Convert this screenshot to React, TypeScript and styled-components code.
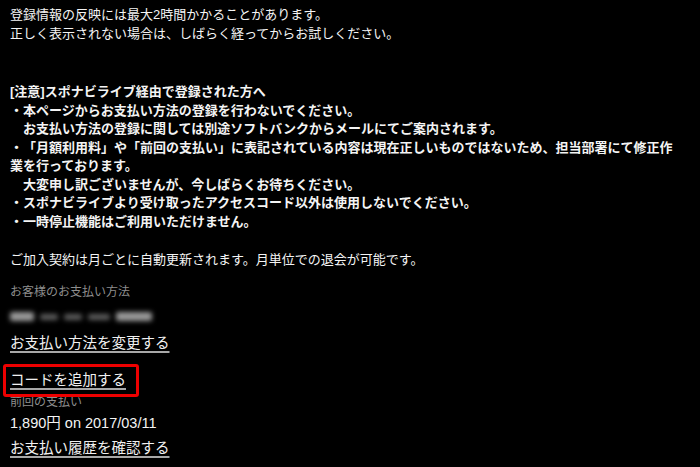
import React from "react";
import styled, { createGlobalStyle } from "styled-components";

const Global = createGlobalStyle`
  html, body { margin: 0; padding: 0; background: #000; }
  body { font-family: "Noto Sans CJK JP", "Noto Sans", sans-serif; }
`;

const Page = styled.main`
  display: flex;
  flex-direction: column;
  align-items: flex-start;
  padding: 6px 22px 0 10px;
  width: 668px;
  min-height: 467px;
  box-sizing: content-box;
  background: #000;
  color: #f2f2f2;
  font-family: "Liberation Sans", "Noto Sans CJK JP", sans-serif;
  text-spacing-trim: space-all;
`;

const Text = styled.p<{ $mt?: number; $bold?: boolean }>`
  margin: ${(p) => p.$mt ?? 0}px 0 0;
  font-size: 13px;
  line-height: 18.5px;
  font-weight: ${(p) => (p.$bold ? 700 : 400)};
  color: #f4f4f4;
  white-space: pre-wrap;
`;

const Label = styled.div<{ $mt?: number }>`
  margin-top: ${(p) => p.$mt ?? 0}px;
  font-size: 12px;
  line-height: 16px;
  color: #8e8e8e;
`;

const Masked = styled.div`
  display: flex;
  align-items: center;
  gap: 6px;
  margin-top: 9px;
  height: 16px;
  filter: blur(2.6px);
`;

const MaskPart = styled.span<{ $w: number; $dim?: boolean }>`
  display: block;
  width: ${(p) => p.$w}px;
  height: ${(p) => (p.$dim ? 6 : 9)}px;
  border-radius: 2px;
  background: ${(p) => (p.$dim ? "#5e5e5e" : "#9a9a9a")};
`;

const LinkRow = styled.div<{ $mt?: number }>`
  position: relative;
  margin-top: ${(p) => p.$mt ?? 0}px;
  line-height: 20px;
`;

const Link = styled.a`
  font-size: 14.5px;
  color: #f0f0f0;
  text-decoration: underline;
  text-decoration-color: #a8a8a8;
  text-decoration-thickness: 2px;
  text-underline-offset: 3px;
  cursor: pointer;
`;

const Amount = styled.div`
  margin-top: 3px;
  font-size: 14.5px;
  line-height: 20px;
  color: #f4f4f4;
`;

const Highlight = styled.span`
  position: absolute;
  left: -7px;
  top: -6px;
  width: 136px;
  height: 33px;
  box-sizing: border-box;
  border: 3px solid #ee0000;
  border-radius: 3px;
  pointer-events: none;
`;

export default function App() {
  return (
    <>
      <Global />
      <Page>
        <Text>
          {"登録情報の反映には最大2時間かかることがあります。\n正しく表示されない場合は、しばらく経ってからお試しください。"}
        </Text>
        <Text $bold $mt={40}>
          {"[注意]スポナビライブ経由で登録された方へ\n・本ページからお支払い方法の登録を行わないでください。\n　お支払い方法の登録に関しては別途ソフトバンクからメールにてご案内されます。\n・「月額利用料」や「前回の支払い」に表記されている内容は現在正しいものではないため、担当部署にて修正作業を行っております。\n　大変申し訳ございませんが、今しばらくお待ちください。\n・スポナビライブより受け取ったアクセスコード以外は使用しないでください。\n・一時停止機能はご利用いただけません。"}
        </Text>
        <Text $mt={20}>ご加入契約は月ごとに自動更新されます。月単位での退会が可能です。</Text>
        <Label $mt={14}>お客様のお支払い方法</Label>
        <Masked aria-label="登録済みのお支払い方法">
          <MaskPart $w={24} />
          <MaskPart $w={18} $dim />
          <MaskPart $w={18} $dim />
          <MaskPart $w={22} $dim />
          <MaskPart $w={36} />
        </Masked>
        <LinkRow $mt={8}>
          <Link>お支払い方法を変更する</Link>
        </LinkRow>
        <LinkRow $mt={17}>
          <Link>コードを追加する</Link>
          <Highlight />
        </LinkRow>
        <Label $mt={4}>前回の支払い</Label>
        <Amount>1,890円 on 2017/03/11</Amount>
        <LinkRow $mt={5}>
          <Link>お支払い履歴を確認する</Link>
        </LinkRow>
      </Page>
    </>
  );
}
